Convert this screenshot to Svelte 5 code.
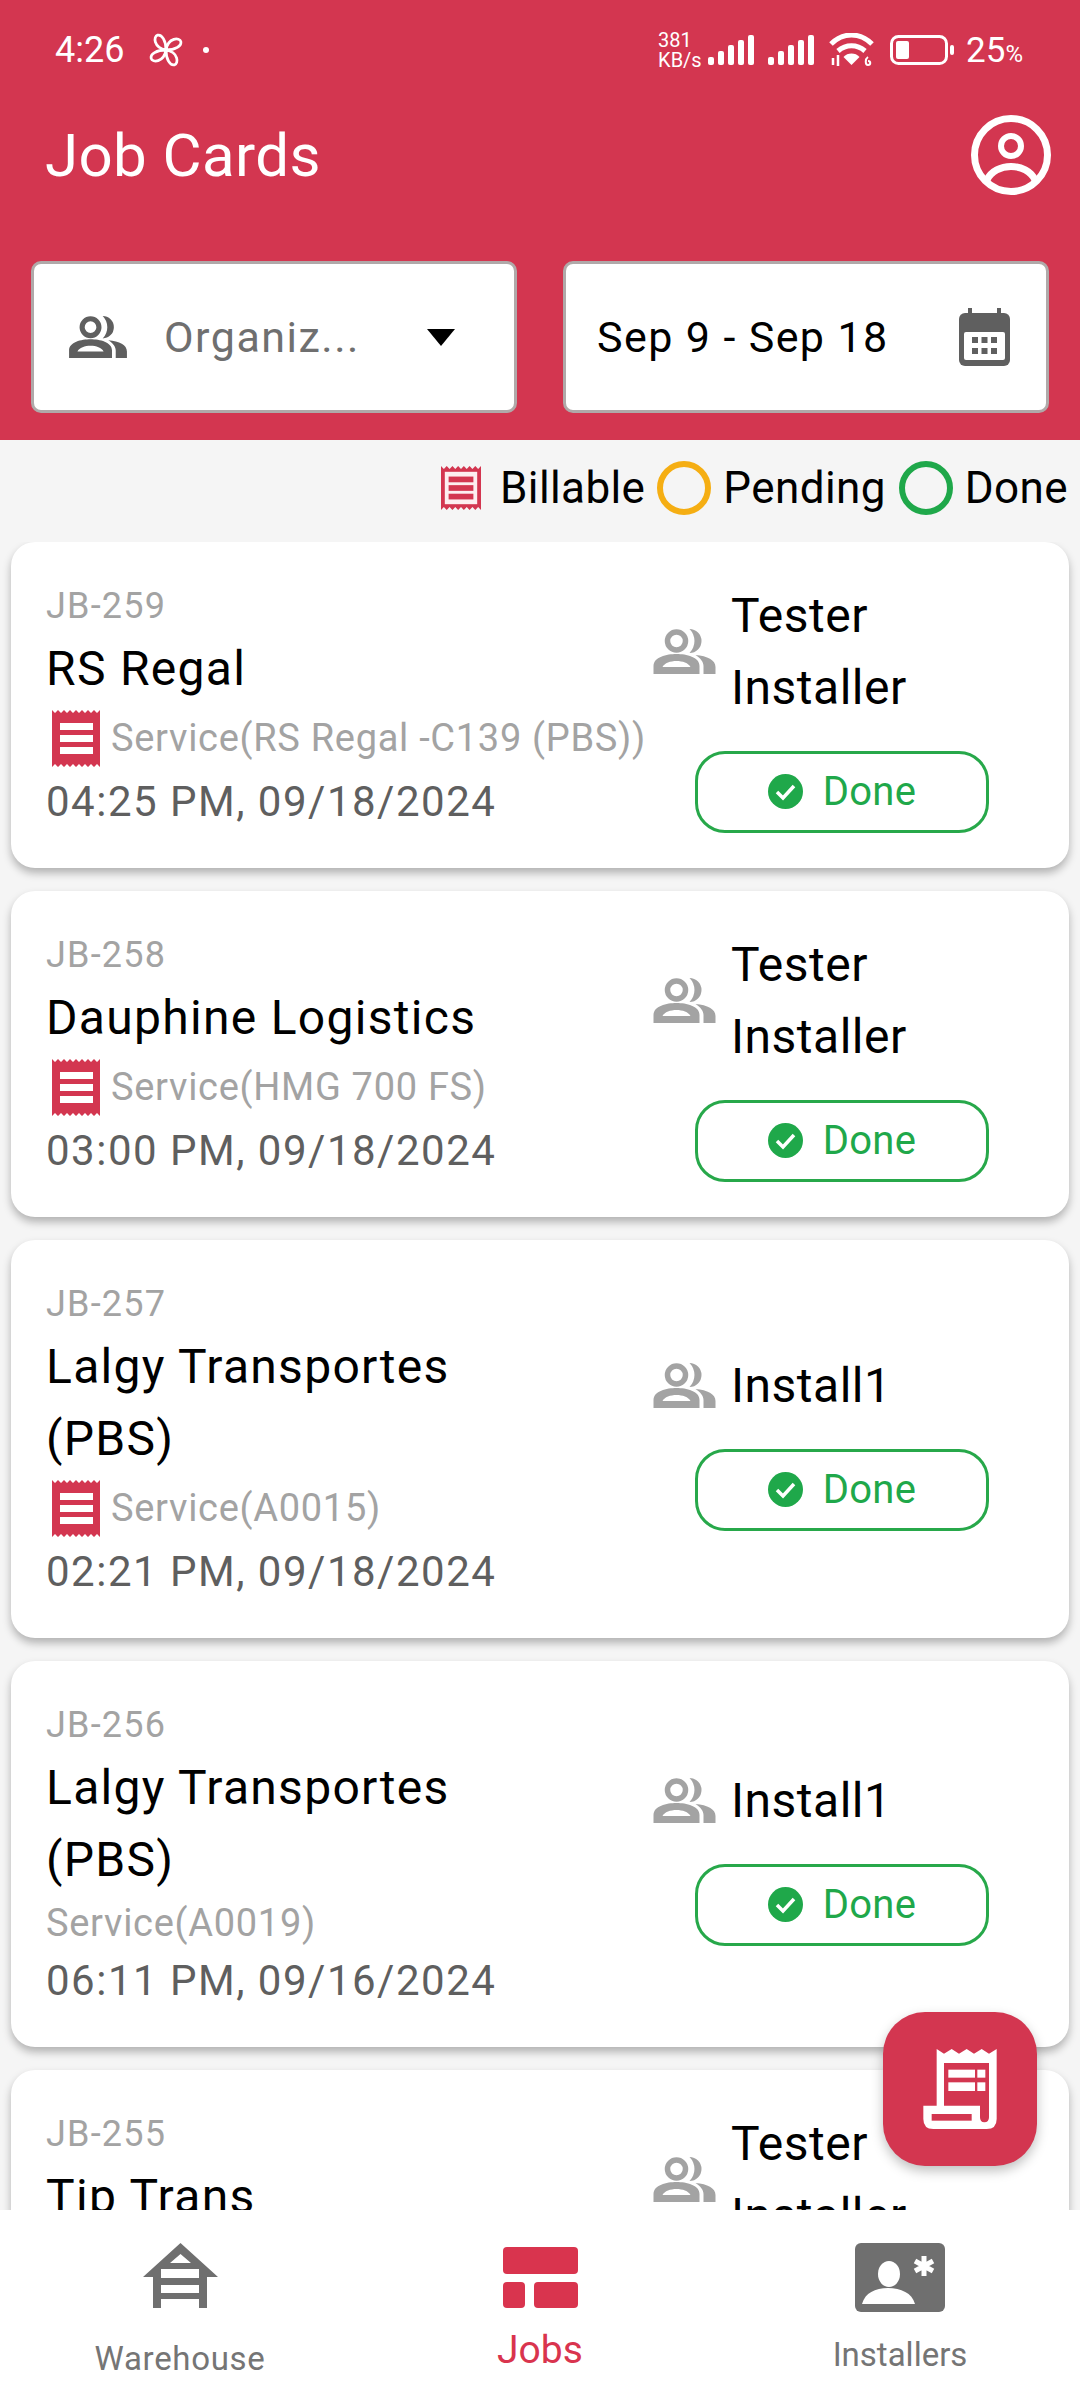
<script>
  const jobs = [
    { id: 'JB-259', name: 'RS Regal', billable: true, service: 'Service(RS Regal -C139 (PBS))', when: '04:25 PM, 09/18/2024', who: ['Tester', 'Installer'] },
    { id: 'JB-258', name: 'Dauphine Logistics', billable: true, service: 'Service(HMG 700 FS)', when: '03:00 PM, 09/18/2024', who: ['Tester', 'Installer'] },
    { id: 'JB-257', name: 'Lalgy Transportes (PBS)', billable: true, service: 'Service(A0015)', when: '02:21 PM, 09/18/2024', who: ['Install1'] },
    { id: 'JB-256', name: 'Lalgy Transportes (PBS)', billable: false, service: 'Service(A0019)', when: '06:11 PM, 09/16/2024', who: ['Install1'] },
    { id: 'JB-255', name: 'Tip Trans', billable: true, service: 'Service(A0012)', when: '05:02 PM, 09/16/2024', who: ['Tester', 'Installer'] }
  ];

  // scalloped top + bottom edge shared by the receipt glyphs
  function scallop(w, h, n) {
    const step = w / n;
    let d = 'M0 0';
    for (let i = 0; i < n; i++) d += ` l${step / 2} 3 l${step / 2} -3`;
    d += ` V${h}`;
    for (let i = 0; i < n; i++) d += ` l${-step / 2} -3 l${-step / 2} 3`;
    return d + ' Z';
  }
  const receipt = scallop(48, 57, 8);
  const legendReceipt = scallop(42, 46, 7);
</script>

{#snippet people(cls)}
  <svg class={cls} viewBox="0 0 62 45">
    <circle cx="23" cy="12" r="9" fill="none" stroke="currentColor" stroke-width="5.5" />
    <path d="M36 0a12 12 0 0 1 0 24a17 17 0 0 0 0-24z" fill="currentColor" />
    <path fill-rule="evenodd" fill="currentColor" d="M0 45v-8C0 28 13 25 23 25s23 3 23 12v8zM9 38h28c-2-4-8-6-14-6s-12 2-14 6z" />
    <path d="M42 26c12 1 20 5 20 12v7H50v-8c0-4-3-8-8-11z" fill="currentColor" />
  </svg>
{/snippet}

<div class="page">
  <header class="top">
    <div class="status">
      <div class="status-left">
        <span class="clock">4:26</span>
        <svg class="fan" viewBox="0 0 34 34" fill="none" stroke="#fff" stroke-width="2.6">
          <path d="M17 17C17 8 13 2 9 3S5 15 17 17ZM17 17C26 17 32 13 31 9S19 5 17 17ZM17 17C17 26 21 32 25 31S29 19 17 17ZM17 17C8 17 2 21 3 25S15 29 17 17Z" />
        </svg>
        <span class="dot"></span>
      </div>
      <div class="status-right">
        <span class="speed">381<br />KB/s</span>
        {#each [0, 1] as s}
          <svg class="signal" viewBox="0 0 47 30" fill="#fff">
            <rect x="0" y="22" width="6" height="8" rx="2" />
            <rect x="10" y="16" width="6" height="14" rx="2" />
            <rect x="20" y="10" width="6" height="20" rx="2" />
            <rect x="30" y="5" width="6" height="25" rx="2" />
            <rect x="40" y="0" width="6" height="30" rx="2" />
          </svg>
        {/each}
        <svg class="wifi" viewBox="0 0 47 34" fill="none" stroke="#fff" stroke-width="5">
          <path d="M3 11C15 -1 32 -1 44 11M10 18C18 11 29 11 37 18" />
          <path d="M23.5 32l-8-8a11 11 0 0 1 16 0z" fill="#fff" stroke="none" />
          <path d="M5 25v7M10 22v11" stroke-width="2.5" />
          <path d="M40 24c-3 2-3 8 0 8s3-4 0-4" stroke-width="2" />
        </svg>
        <svg class="battery" viewBox="0 0 65 30">
          <rect x="1.5" y="1.5" width="55" height="27" rx="7" fill="none" stroke="#fff" stroke-width="3" />
          <rect x="6" y="6" width="13" height="18" rx="2" fill="#fff" />
          <rect x="60" y="10" width="4" height="10" rx="2" fill="#fff" />
        </svg>
        <span class="pct">25<small>%</small></span>
      </div>
    </div>

    <div class="title-row">
      <h1>Job Cards</h1>
      <svg class="profile" viewBox="0 0 80 80" fill="none" stroke="#fff">
        <circle cx="40" cy="40" r="36.5" stroke-width="7" />
        <circle cx="40" cy="31" r="10" stroke-width="6" />
        <path d="M16 65C24 47 56 47 64 65" stroke-width="7" />
      </svg>
    </div>

    <div class="filters">
      <div class="filter">
        {@render people('org-icon')}
        <span class="org-text">Organiz...</span>
        <span class="caret"></span>
      </div>
      <div class="filter date">
        <span class="date-text">Sep 9 - Sep 18</span>
        <svg class="calendar" viewBox="0 0 51 58" fill="#5f5f5f">
          <rect x="9" y="0" width="4" height="9" />
          <rect x="38" y="0" width="4" height="9" />
          <rect x="0" y="5" width="51" height="53" rx="6" />
          <rect x="5" y="24" width="41" height="28" rx="2" fill="#fff" />
          {#each [13, 22.5, 32] as x}
            <rect {x} y="29" width="6" height="6" />
            <rect {x} y="40" width="6" height="6" />
          {/each}
        </svg>
      </div>
    </div>
  </header>

  <div class="legend">
    <svg class="legend-receipt" viewBox="0 0 42 46">
      <path d={legendReceipt} fill="#d33650" />
      <rect x="4" y="6" width="34" height="34" fill="#fdeef0" />
      <rect x="8" y="11" width="26" height="6" fill="#d33650" />
      <rect x="8" y="20" width="26" height="6" fill="#d33650" />
      <rect x="8" y="29" width="26" height="6" fill="#d33650" />
    </svg>
    <span class="legend-billable">Billable</span>
    <span class="ring pending"></span>
    <span class="legend-pending">Pending</span>
    <span class="ring done"></span>
    <span>Done</span>
  </div>

  <div class="list">
    {#each jobs as job}
      <article class="card">
        <div class="info">
          <div class="job-id">{job.id}</div>
          <div class="job-name">{job.name}</div>
          <div class="service" class:billable={job.billable}>
            {#if job.billable}
              <svg class="receipt" viewBox="0 0 48 57">
                <path d={receipt} fill="#d33650" />
                <rect x="8" y="13" width="33" height="7" fill="#fff" />
                <rect x="8" y="25" width="33" height="7" fill="#fff" />
                <rect x="8" y="37" width="33" height="7" fill="#fff" />
              </svg>
            {/if}
            <span>{job.service}</span>
          </div>
          <div class="when">{job.when}</div>
        </div>
        <div class="side">
          <div class="assignee">
            {@render people('who-icon')}
            <div class="who">
              {#each job.who as w}<div>{w}</div>{/each}
            </div>
          </div>
          <div class="pill">
            <svg class="check" viewBox="0 0 35 35">
              <circle cx="17.5" cy="17.5" r="17.5" fill="#1fa84a" />
              <path d="M9 18l6 6 11-12" fill="none" stroke="#fff" stroke-width="3.5" />
            </svg>
            <span>Done</span>
          </div>
        </div>
      </article>
    {/each}
  </div>

  <nav class="bottom">
    <div class="tab warehouse">
      <svg viewBox="0 0 75 65" fill="#6f6f6f" width="75" height="65">
        <path fill-rule="evenodd" d="M37.5 0L75 34H64V65H56V56H18V65H10V34H0ZM37.5 11L27 20H48ZM18 26V35H56V26ZM18 42V50H56V42Z" />
      </svg>
      <span>Warehouse</span>
    </div>
    <div class="tab jobs">
      <svg viewBox="0 0 75 61" fill="#d9344e" width="75" height="61">
        <rect width="75" height="27" rx="4" />
        <rect y="35" width="22" height="26" rx="4" />
        <rect x="31" y="35" width="44" height="26" rx="4" />
      </svg>
      <span>Jobs</span>
    </div>
    <div class="tab installers">
      <svg viewBox="0 0 90 69" width="90" height="69">
        <rect width="90" height="69" rx="6" fill="#6f6f6f" />
        <ellipse cx="34" cy="31" rx="11" ry="13" fill="#fff" />
        <path d="M7 61C10 50 20 45 33 45S57 50 60 61Z" fill="#fff" />
        <path d="M69 13V33M60 18L78 28M78 18L60 28" stroke="#fff" stroke-width="5" />
      </svg>
      <span>Installers</span>
    </div>
  </nav>

  <button class="fab" aria-label="New job card">
    <svg viewBox="0 0 220 240" width="74" height="80">
      <path fill="#fff" d="M40 0l22 14 23-14 22 14 23-14 22 14 23-14 22 14 23-14V210Q220 240 190 240H30Q0 240 0 210V170H40Z" />
      <path fill="#d33650" d="M62 42H197V205Q197 220 183 220Q170 220 170 205V170H62Z" />
      <rect x="25" y="195" width="120" height="20" fill="#d33650" />
      <rect x="75" y="62" width="80" height="24" fill="#fff" />
      <rect x="162" y="62" width="24" height="24" fill="#fff" />
      <rect x="75" y="100" width="80" height="26" fill="#fff" />
      <rect x="162" y="100" width="24" height="26" fill="#fff" />
    </svg>
  </button>
</div>

<style>
  :global(body) { margin: 0; background: #f5f5f5; }
  .page {
    position: relative; width: 1080px; height: 2400px; overflow: hidden;
    display: flex; flex-direction: column; background: #f5f5f5;
    font-family: Roboto, "Liberation Sans", sans-serif; color: #000;
  }

  /* header */
  .top { background: #d33650; padding-bottom: 27px; color: #fff; }
  .status {
    height: 100px; display: flex; justify-content: space-between; align-items: center;
    padding: 0 57px 0 55px;
  }
  .status-left, .status-right { display: flex; align-items: center; }
  .clock { font-size: 36px; }
  .fan { width: 36px; height: 36px; margin-left: 24px; }
  .dot { width: 6px; height: 6px; border-radius: 50%; background: #fff; margin-left: 19px; }
  .speed { font-size: 20px; line-height: 20px; width: 50px; }
  .signal { width: 47px; height: 30px; margin-right: 13px; }
  .wifi { width: 47px; height: 34px; margin-right: 15px; }
  .battery { width: 65px; height: 30px; margin-right: 11px; }
  .pct { font-size: 35px; }
  .pct small { font-size: 24px; }

  .title-row {
    height: 110px; display: flex; justify-content: space-between; align-items: center;
    padding: 0 29px 0 45px;
  }
  h1 { margin: 0; font-size: 60px; font-weight: 400; letter-spacing: 0.4px; }
  .profile { width: 80px; height: 80px; }

  .filters { display: grid; grid-template-columns: 1fr 1fr; gap: 46px; padding: 51px 31px 0; }
  .filter {
    min-width: 0; height: 152px; box-sizing: border-box; background: #fff; color: #000;
    border: 3px solid #b0a9a9; border-radius: 10px;
    display: flex; align-items: center; position: relative;
  }
  :global(.org-icon) { width: 58px; height: 42px; margin-left: 35px; color: #5f5f5f; flex: none; }
  .org-text { font-size: 43px; letter-spacing: 1.5px; color: #6f6f6f; margin-left: 37px; white-space: nowrap; }
  .caret {
    margin-left: auto; margin-right: 59px; width: 0; height: 0;
    border-left: 14px solid transparent; border-right: 14px solid transparent; border-top: 17px solid #000;
  }
  .date { padding: 0 36px 0 31px; justify-content: space-between; }
  .date-text { font-size: 43px; letter-spacing: 1.4px; white-space: nowrap; }
  .calendar { width: 51px; height: 58px; flex: none; }

  /* legend */
  .legend {
    height: 102px; flex: none; box-sizing: border-box; padding: 0 12px 6px 0;
    display: flex; align-items: center; justify-content: flex-end; font-size: 44px; letter-spacing: 0.4px;
  }
  .legend-receipt { width: 40px; height: 46px; margin-right: 19px; }
  .legend-billable { margin-right: 12px; }
  .legend-pending { margin-right: 13px; }
  .ring { width: 54px; height: 54px; box-sizing: border-box; border-radius: 50%; border: 6px solid; margin-right: 12px; }
  .ring.pending { border-color: #f5ae13; }
  .ring.done { border-color: #1fa84a; }

  /* job cards */
  .list { flex: 1; min-height: 0; overflow: hidden; padding: 0 11px; display: flex; flex-direction: column; gap: 23px; }
  .card {
    flex: none; background: #fff; border-radius: 24px; display: flex; align-items: center;
    box-shadow: 0 5px 9px rgba(0, 0, 0, 0.28);
  }
  .info { width: 607px; padding: 42px 0 35px 35px; flex: none; }
  .job-id { font-size: 36px; line-height: 44px; color: #a3a3a3; letter-spacing: 1.2px; margin-bottom: 5px; }
  .job-name { font-size: 48px; line-height: 72px; letter-spacing: 1.3px; max-width: 500px; }
  .service { height: 54px; display: flex; align-items: center; font-size: 38px; letter-spacing: 0.7px; color: #a3a3a3; white-space: nowrap; }
  .service.billable { height: 66px; }
  .receipt { width: 48px; height: 57px; margin: 0 11px 0 6px; flex: none; }
  .when { font-size: 42px; line-height: 62px; letter-spacing: 1.5px; color: #5f5f5f; }

  .side { width: 378px; display: flex; flex-direction: column; align-items: center; gap: 27px; padding-top: 2px; }
  .assignee { width: 100%; display: flex; align-items: center; gap: 15px; }
  :global(.who-icon) { width: 63px; height: 45px; color: #a3a3a3; flex: none; }
  .who { font-size: 48px; line-height: 72px; letter-spacing: 0.5px; }
  .pill {
    width: 294px; height: 82px; box-sizing: border-box; border: 3px solid #27a84a; border-radius: 30px;
    display: flex; align-items: center; justify-content: center; gap: 20px;
    font-size: 40px; letter-spacing: 0.3px; color: #1fa84a;
  }
  .check { width: 35px; height: 35px; }

  /* bottom nav */
  .bottom { height: 190px; flex: none; background: #fff; display: flex; position: relative; }
  .tab { flex: 1; display: flex; flex-direction: column; align-items: center; font-size: 33px; color: #757575; }
  .tab svg { flex: none; }
  .tab span { line-height: 40px; }
  .warehouse { padding-top: 33px; letter-spacing: 0.7px; }
  .warehouse span { margin-top: 31px; }
  .jobs { padding-top: 37px; color: #d9344e; font-size: 39px; }
  .jobs span { margin-top: 22px; }
  .installers { padding-top: 33px; }
  .installers span { margin-top: 23px; }

  .fab {
    position: absolute; left: 883px; top: 2012px; width: 154px; height: 154px; padding: 0; border: none;
    border-radius: 42px; background: #d33650; box-shadow: 0 5px 12px rgba(0, 0, 0, 0.25);
    display: flex; align-items: center; justify-content: center;
  }
</style>
